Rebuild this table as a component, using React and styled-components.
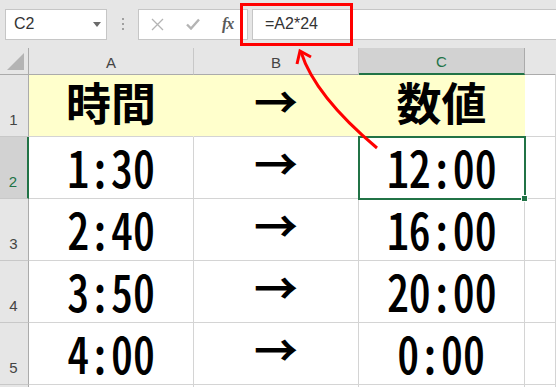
import React from "react";
import styled, { createGlobalStyle, css } from "styled-components";

const GlobalStyle = createGlobalStyle`
  html, body {
    margin: 0;
    padding: 0;
    background: #ffffff;
    overflow: hidden;
  }
  body {
    font-family: "Liberation Sans", "Noto Sans CJK JP", sans-serif;
  }
`;

const Page = styled.div`
  position: relative;
  width: 556px;
  height: 387px;
  overflow: hidden;
`;

const Toolbar = styled.div`
  height: 48px;
  background: #e6e6e6;
  display: flex;
  align-items: center;
  padding-left: 5px;
  box-sizing: border-box;
`;

const Box = styled.div`
  height: 31px;
  box-sizing: border-box;
  background: #ffffff;
  border: 1px solid #c6c6c6;
  display: flex;
  align-items: center;
`;

const NameBox = styled(Box)`
  width: 102px;
  padding-left: 8px;
  justify-content: space-between;
  padding-right: 4px;
  font-size: 16px;
  color: #333333;
`;

const DropArrow = styled.span`
  width: 0;
  height: 0;
  border-left: 4px solid transparent;
  border-right: 4px solid transparent;
  border-top: 5px solid #6a6a6a;
  margin-right: 1px;
`;

const Grip = styled.div`
  width: 31px;
  display: flex;
  flex-direction: column;
  align-items: center;
  gap: 3px;
  span {
    width: 2px;
    height: 2px;
    background: #a0a0a0;
  }
`;

const ButtonsBox = styled(Box)`
  width: 110px;
  padding-left: 12px;
`;

const ToolButton = styled.span`
  width: 35px;
  display: flex;
  align-items: center;
  justify-content: flex-start;
  color: #b4b4b4;
`;

const Fx = styled.span`
  font-family: "Liberation Serif", serif;
  font-style: italic;
  font-weight: 700;
  font-size: 16px;
  color: #5a5a5a;
  letter-spacing: -1px;
  margin-left: 1px;
`;

const FormulaBox = styled(Box)`
  flex: 1;
  margin-left: 4px;
  padding-left: 12px;
  font-size: 16px;
  color: #333333;
  border-right: none;
`;

const Sheet = styled.div`
  display: grid;
  grid-template-columns: 29px 165px 165px 166px 1fr;
  grid-template-rows: 27px repeat(5, 62px) 20px;
`;

const headerBase = css`
  box-sizing: border-box;
  background: ${(p) => (p.$selected ? "#d2d2d2" : "#e6e6e6")};
  color: ${(p) => (p.$selected ? "#217346" : "#444444")};
  font-size: 15px;
  display: flex;
`;

const Corner = styled.div`
  position: relative;
  box-sizing: border-box;
  background: #e6e6e6;
  border-right: 1px solid #ababab;
  border-bottom: 1px solid #ababab;
  svg {
    position: absolute;
    right: 3px;
    bottom: 3px;
  }
`;

const ColHeader = styled.div`
  ${headerBase};
  align-items: center;
  justify-content: center;
  padding-top: 2px;
  border-right: 1px solid ${(p) => (p.$last ? "transparent" : "#c8c8c8")};
  border-bottom: ${(p) => (p.$selected ? "2px solid #217346" : "1px solid #ababab")};
  ${(p) => p.$selected && "border-right-color: #ababab;"}
`;

const RowHeader = styled.div`
  ${headerBase};
  align-items: flex-end;
  justify-content: center;
  padding-bottom: 8px;
  padding-right: 1px;
  border-bottom: 1px solid #c8c8c8;
  border-right: ${(p) => (p.$selected ? "2px solid #217346" : "1px solid #ababab")};
`;

const Cell = styled.div`
  position: relative;
  box-sizing: border-box;
  background: ${(p) => (p.$fill ? "#ffffcc" : "#ffffff")};
  border-right: 1px solid ${(p) => (p.$fill ? "#ffffcc" : "#d4d4d4")};
  border-bottom: 1px solid #d4d4d4;
  display: flex;
  align-items: flex-end;
  justify-content: center;
  padding-bottom: ${(p) => (p.$arrow ? "14px" : "6px")};
  font-family: "Noto Sans CJK JP", sans-serif;
  color: #000000;
  line-height: 1;
  ${(p) =>
    p.$active &&
    css`
      outline: 2px solid #217346;
      outline-offset: -1px;
      z-index: 2;
      &::after {
        content: "";
        position: absolute;
        right: -4px;
        bottom: -4px;
        width: 5px;
        height: 5px;
        background: #217346;
        border: 1px solid #ffffff;
      }
    `}
`;

const Title = styled.span`
  font-size: 45px;
  font-weight: 700;
  padding-bottom: 6px;
`;

const Num = styled.span`
  display: inline-block;
  font-size: 51px;
  font-weight: 500;
  font-feature-settings: "hwid" 1;
  transform: scaleX(0.86);
`;

const Arrow = styled.span`
  font-size: 44px;
  font-weight: 700;
`;

const Overlay = styled.svg`
  position: absolute;
  left: 0;
  top: 0;
  pointer-events: none;
  z-index: 5;
`;

const rows = [
  { n: 1, a: "時間", c: "数値", header: true },
  { n: 2, a: "1:30", c: "12:00" },
  { n: 3, a: "2:40", c: "16:00" },
  { n: 4, a: "3:50", c: "20:00" },
  { n: 5, a: "4:00", c: "0:00" },
];

export default function App() {
  return (
    <Page>
      <GlobalStyle />
      <Toolbar>
        <NameBox>
          C2
          <DropArrow />
        </NameBox>
        <Grip>
          <span />
          <span />
          <span />
        </Grip>
        <ButtonsBox>
          <ToolButton>
            <svg width="13" height="13" viewBox="0 0 13 13">
              <path d="M1 1L12 12M12 1L1 12" stroke="currentColor" strokeWidth="1.3" fill="none" />
            </svg>
          </ToolButton>
          <ToolButton>
            <svg width="14" height="12" viewBox="0 0 14 12">
              <path d="M1 6.5L5 10.5L13 1.5" stroke="currentColor" strokeWidth="2.4" fill="none" />
            </svg>
          </ToolButton>
          <Fx>fx</Fx>
        </ButtonsBox>
        <FormulaBox>=A2*24</FormulaBox>
      </Toolbar>

      <Sheet>
        <Corner>
          <svg width="18" height="18" viewBox="0 0 18 18">
            <polygon points="17,0 17,17 0,17" fill="#b4b4b4" />
          </svg>
        </Corner>
        <ColHeader>A</ColHeader>
        <ColHeader>B</ColHeader>
        <ColHeader $selected>C</ColHeader>
        <ColHeader $last />

        {rows.map((r) => (
          <React.Fragment key={r.n}>
            <RowHeader $selected={r.n === 2}>{r.n}</RowHeader>
            <Cell $fill={r.header}>
              {r.header ? <Title>{r.a}</Title> : <Num>{r.a}</Num>}
            </Cell>
            <Cell $fill={r.header} $arrow>
              <Arrow>→</Arrow>
            </Cell>
            <Cell $fill={r.header} $active={r.n === 2}>
              {r.header ? <Title>{r.c}</Title> : <Num>{r.c}</Num>}
            </Cell>
            <Cell />
          </React.Fragment>
        ))}

        <RowHeader />
        <Cell />
        <Cell />
        <Cell />
        <Cell />
      </Sheet>

      <Overlay width="556" height="387" viewBox="0 0 556 387">
        <rect x="241.5" y="4.5" width="110" height="40" fill="none" stroke="#ff0000" strokeWidth="3" />
        <path d="M377 148Q315 96 301 52" fill="none" stroke="#ff0000" strokeWidth="3" />
        <path d="M297 64L300 51L311 57" fill="none" stroke="#ff0000" strokeWidth="3" strokeLinejoin="miter" />
      </Overlay>
    </Page>
  );
}
